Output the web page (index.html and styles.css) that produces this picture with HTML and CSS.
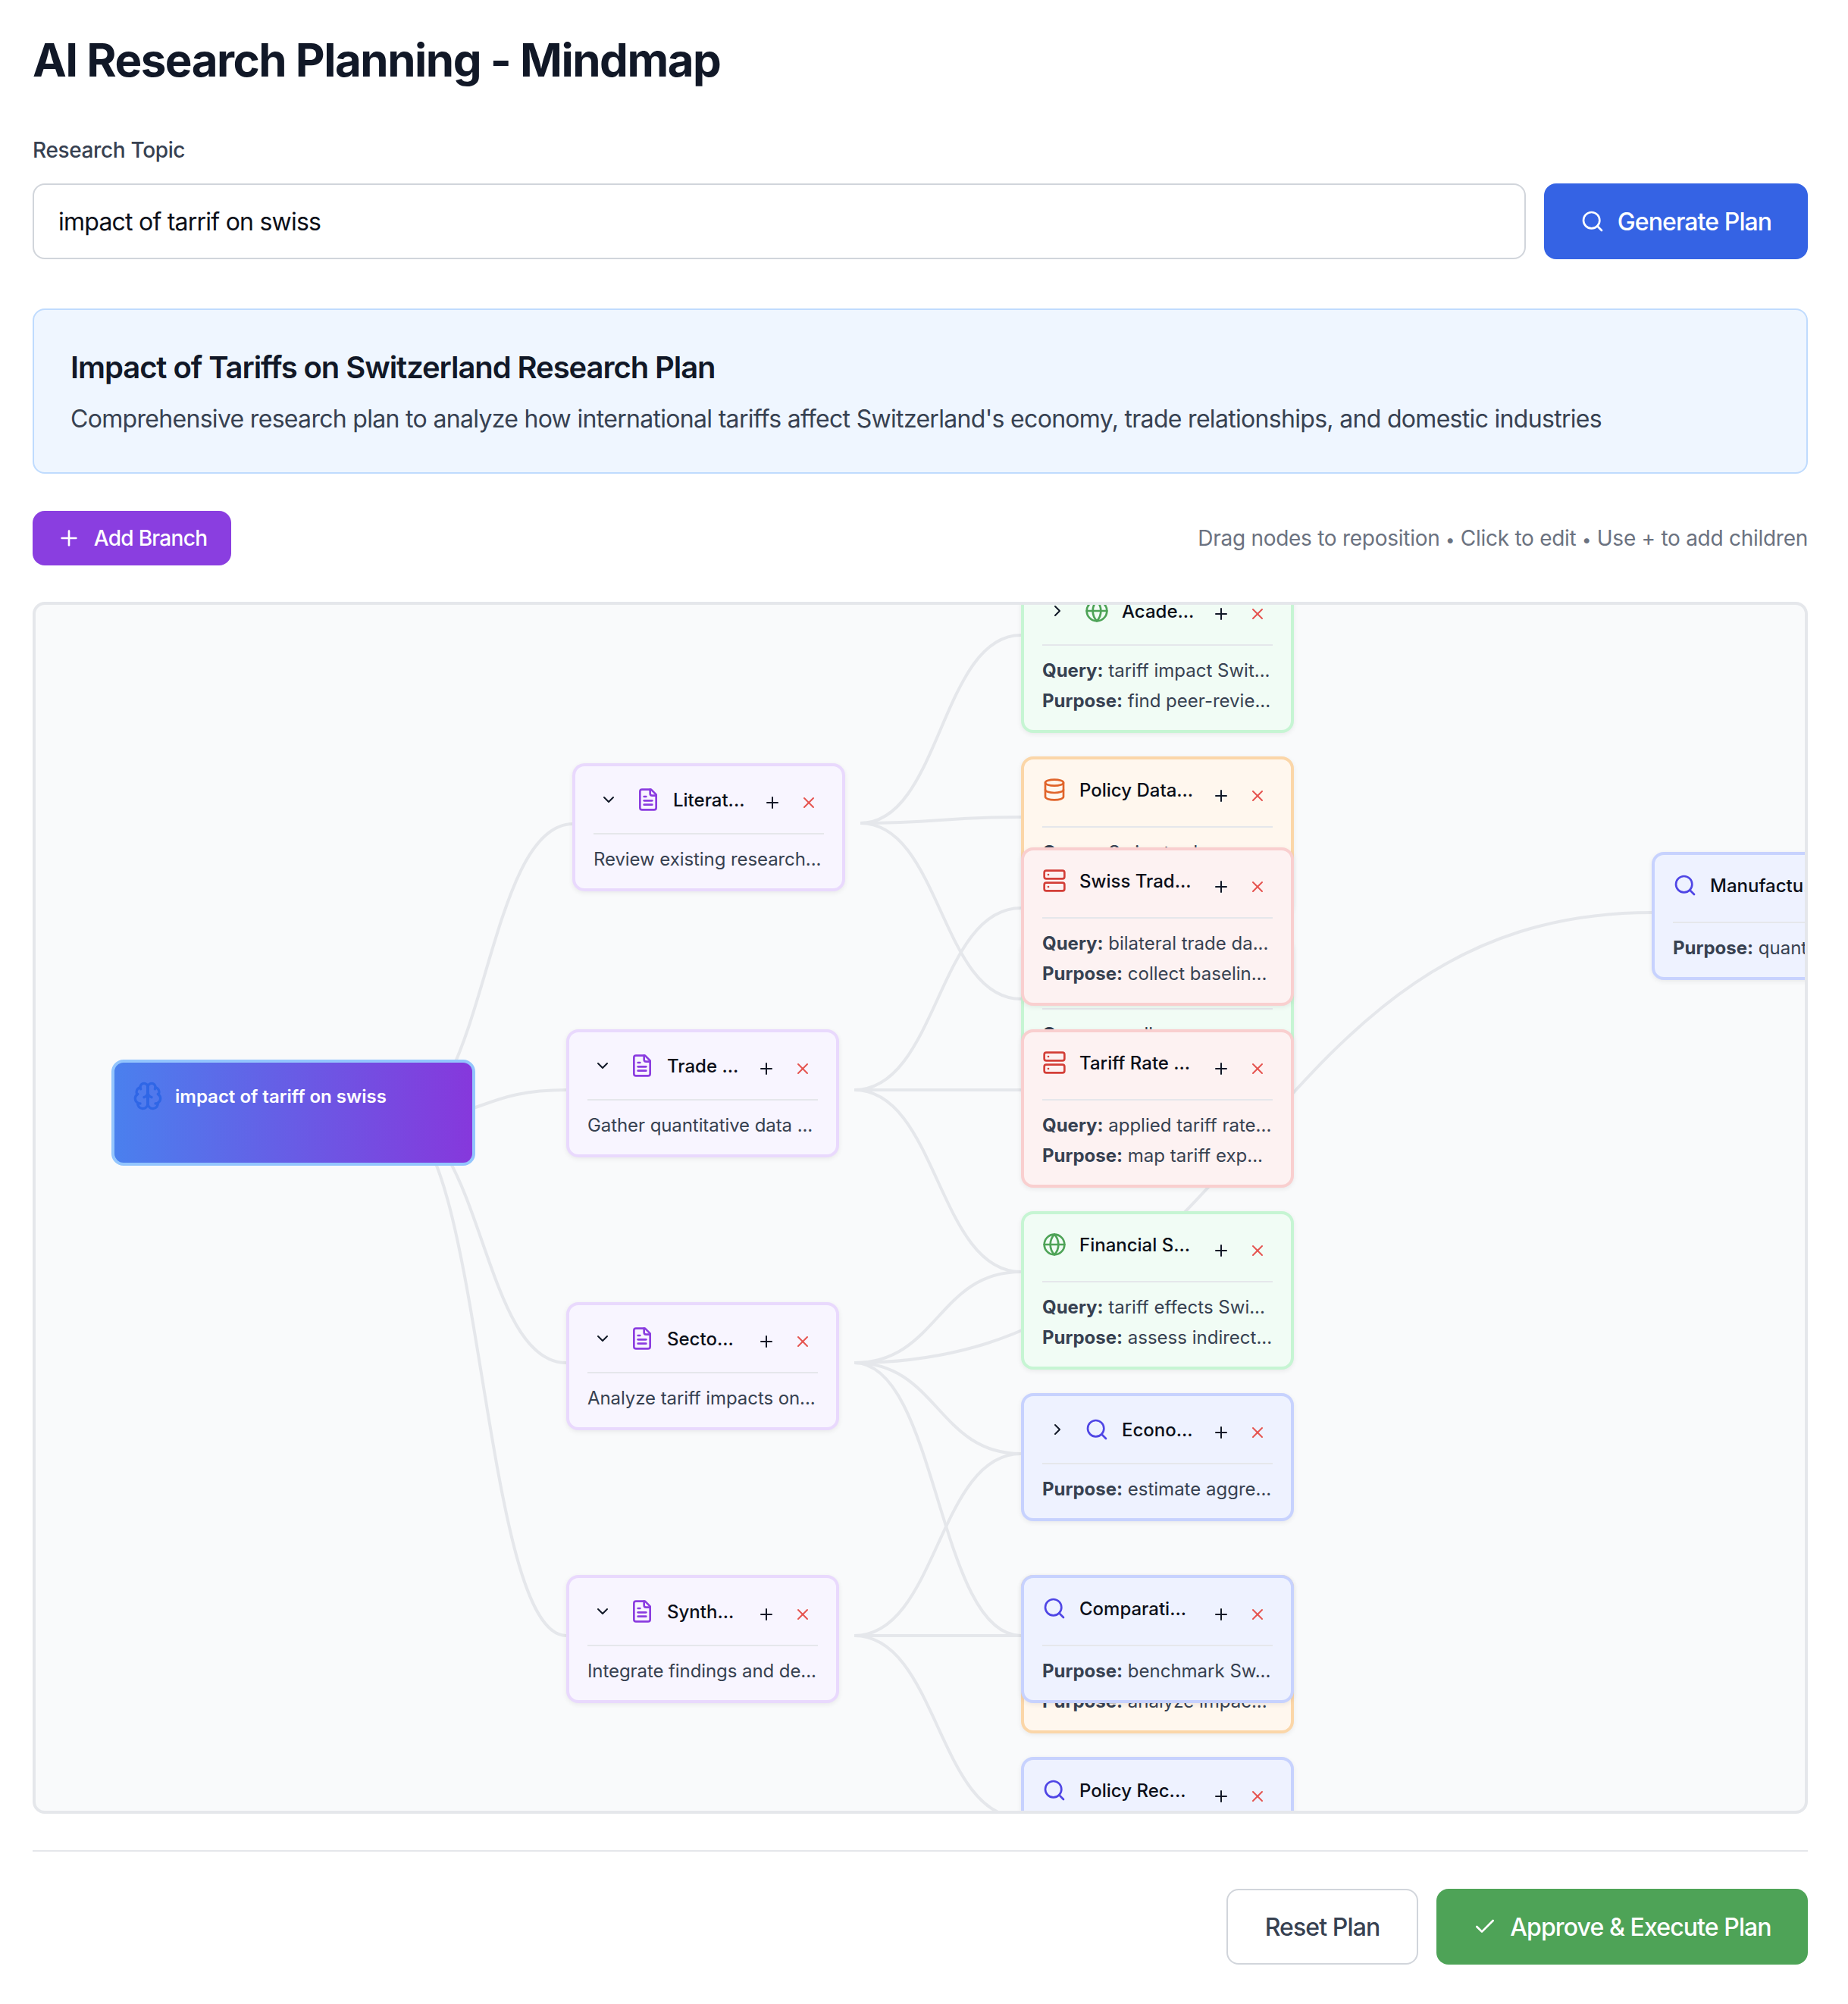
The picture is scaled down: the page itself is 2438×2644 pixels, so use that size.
FILE: index.html
```html
<!DOCTYPE html>
<html lang="en">
<head>
<meta charset="utf-8">
<title>AI Research Planning - Mindmap</title>
<link rel="stylesheet" href="styles.css">
</head>
<body>
<svg class="sprite" aria-hidden="true">
  <defs>
    <symbol id="i-search" viewBox="0 0 24 24"><circle cx="11" cy="11" r="8"/><path d="m21 21-4.3-4.3"/></symbol>
    <symbol id="i-plus" viewBox="0 0 24 24"><path d="M5 12h14"/><path d="M12 5v14"/></symbol>
    <symbol id="i-x" viewBox="0 0 24 24"><path d="M18 6 6 18"/><path d="m6 6 12 12"/></symbol>
    <symbol id="i-check" viewBox="0 0 24 24"><path d="M20 6 9 17l-5-5"/></symbol>
    <symbol id="i-down" viewBox="0 0 24 24"><path d="m6 9 6 6 6-6"/></symbol>
    <symbol id="i-right" viewBox="0 0 24 24"><path d="m9 18 6-6-6-6"/></symbol>
    <symbol id="i-file" viewBox="0 0 24 24"><path d="M15 2H6a2 2 0 0 0-2 2v16a2 2 0 0 0 2 2h12a2 2 0 0 0 2-2V7Z"/><path d="M14 2v4a2 2 0 0 0 2 2h4"/><path d="M10 9H8"/><path d="M16 13H8"/><path d="M16 17H8"/></symbol>
    <symbol id="i-globe" viewBox="0 0 24 24"><circle cx="12" cy="12" r="10"/><path d="M12 2a14.5 14.5 0 0 0 0 20 14.5 14.5 0 0 0 0-20"/><path d="M2 12h20"/></symbol>
    <symbol id="i-db" viewBox="0 0 24 24"><ellipse cx="12" cy="5" rx="9" ry="3"/><path d="M3 5V19A9 3 0 0 0 21 19V5"/><path d="M3 12A9 3 0 0 0 21 12"/></symbol>
    <symbol id="i-server" viewBox="0 0 24 24"><rect width="20" height="8" x="2" y="2" rx="2" ry="2"/><rect width="20" height="8" x="2" y="14" rx="2" ry="2"/><path d="M6 6h.01"/><path d="M6 18h.01"/></symbol>
    <symbol id="i-brain" viewBox="0 0 24 24"><path d="M12 5a3 3 0 1 0-5.997.125 4 4 0 0 0-2.526 5.77 4 4 0 0 0 .556 6.588A4 4 0 1 0 12 18Z"/><path d="M12 5a3 3 0 1 1 5.997.125 4 4 0 0 1 2.526 5.77 4 4 0 0 1-.556 6.588A4 4 0 1 1 12 18Z"/><path d="M15 13a4.5 4.5 0 0 1-3-4 4.5 4.5 0 0 1-3 4"/><path d="M12 5v13"/><path d="M17.599 6.5a3 3 0 0 0 .399-1.375"/><path d="M6.003 5.125A3 3 0 0 0 6.401 6.5"/><path d="M3.477 10.896a4 4 0 0 1 .585-.396"/><path d="M19.938 10.5a4 4 0 0 1 .585.396"/><path d="M6 18a4 4 0 0 1-1.967-.516"/><path d="M19.967 17.484A4 4 0 0 1 18 18"/></symbol>
  </defs>
</svg>

<main class="page">
  <h1 class="title">AI Research Planning - Mindmap</h1>

  <label class="label" for="topic">Research Topic</label>
  <div class="topic-row">
    <input class="topic-input" id="topic" type="text" value="impact of tarrif on swiss">
    <button class="btn btn-blue" type="button"><svg class="ico ico-btn"><use href="#i-search"/></svg>Generate Plan</button>
  </div>

  <section class="info">
    <h2 class="info-title">Impact of Tariffs on Switzerland Research Plan</h2>
    <p class="info-text">Comprehensive research plan to analyze how international tariffs affect Switzerland's economy, trade relationships, and domestic industries</p>
  </section>

  <div class="toolbar">
    <button class="btn btn-purple" type="button"><svg class="ico ico-btn"><use href="#i-plus"/></svg>Add Branch</button>
    <span class="hint">Drag nodes to reposition <span class="sep">•</span> Click to edit <span class="sep">•</span> Use + to add children</span>
  </div>

  <div class="canvas">
    <svg class="links" width="2400" height="1800" aria-hidden="true">
      <path d="M478 680C593.5 680 593.5 289 709 289"/>
      <path d="M478 680C589 680 589 640 700 640"/>
      <path d="M478 680C589 680 589 1000 700 1000"/>
      <path d="M478 680C589 680 589 1360 700 1360"/>
      <path d="M1088 288C1194 288 1194 40 1300 40"/>
      <path d="M1088 288C1194 288 1194 280 1300 280"/>
      <path d="M1088 288C1194 288 1194 520 1300 520"/>
      <path d="M1080 640C1190 640 1190 400 1300 400"/>
      <path d="M1080 640H1300"/>
      <path d="M1080 640C1190 640 1190 880 1300 880"/>
      <path d="M1080 1000C1190 1000 1190 880 1300 880"/>
      <path d="M1080 1000C1606 1000 1606 406 2132 406"/>
      <path d="M1080 1000C1190 1000 1190 1120 1300 1120"/>
      <path d="M1080 1000C1190 1000 1190 1360 1300 1360"/>
      <path d="M1080 1360C1190 1360 1190 1120 1300 1120"/>
      <path d="M1080 1360H1300"/>
      <path d="M1080 1360C1190 1360 1190 1600 1300 1600"/>
    </svg>

    <div class="root">
      <svg class="ico ico-brain"><use href="#i-brain"/></svg>
      <span class="root-text">impact of tariff on swiss</span>
    </div>

    <article class="node purple n-lit">
      <header class="node-head">
        <button class="chev" type="button"><svg class="ico ico-sm"><use href="#i-down"/></svg></button>
        <svg class="ico ico-type"><use href="#i-file"/></svg>
        <span class="node-title">Literat...</span>
        <span class="node-actions"><button class="act" type="button"><svg class="ico ico-sm"><use href="#i-plus"/></svg></button><button class="act del" type="button"><svg class="ico ico-sm"><use href="#i-x"/></svg></button></span>
      </header>
      <div class="node-body"><p>Review existing research...</p></div>
    </article>

    <article class="node purple n-trade">
      <header class="node-head">
        <button class="chev" type="button"><svg class="ico ico-sm"><use href="#i-down"/></svg></button>
        <svg class="ico ico-type"><use href="#i-file"/></svg>
        <span class="node-title">Trade ...</span>
        <span class="node-actions"><button class="act" type="button"><svg class="ico ico-sm"><use href="#i-plus"/></svg></button><button class="act del" type="button"><svg class="ico ico-sm"><use href="#i-x"/></svg></button></span>
      </header>
      <div class="node-body"><p>Gather quantitative data ...</p></div>
    </article>

    <article class="node purple n-sector">
      <header class="node-head">
        <button class="chev" type="button"><svg class="ico ico-sm"><use href="#i-down"/></svg></button>
        <svg class="ico ico-type"><use href="#i-file"/></svg>
        <span class="node-title">Secto...</span>
        <span class="node-actions"><button class="act" type="button"><svg class="ico ico-sm"><use href="#i-plus"/></svg></button><button class="act del" type="button"><svg class="ico ico-sm"><use href="#i-x"/></svg></button></span>
      </header>
      <div class="node-body"><p>Analyze tariff impacts on...</p></div>
    </article>

    <article class="node purple n-synth">
      <header class="node-head">
        <button class="chev" type="button"><svg class="ico ico-sm"><use href="#i-down"/></svg></button>
        <svg class="ico ico-type"><use href="#i-file"/></svg>
        <span class="node-title">Synth...</span>
        <span class="node-actions"><button class="act" type="button"><svg class="ico ico-sm"><use href="#i-plus"/></svg></button><button class="act del" type="button"><svg class="ico ico-sm"><use href="#i-x"/></svg></button></span>
      </header>
      <div class="node-body"><p>Integrate findings and de...</p></div>
    </article>

    <article class="node green n-academic">
      <header class="node-head">
        <button class="chev" type="button"><svg class="ico ico-sm"><use href="#i-right"/></svg></button>
        <svg class="ico ico-type"><use href="#i-globe"/></svg>
        <span class="node-title">Acade...</span>
        <span class="node-actions"><button class="act" type="button"><svg class="ico ico-sm"><use href="#i-plus"/></svg></button><button class="act del" type="button"><svg class="ico ico-sm"><use href="#i-x"/></svg></button></span>
      </header>
      <div class="node-body"><p><b>Query:</b> tariff impact Swit...</p><p><b>Purpose:</b> find peer-revie...</p></div>
    </article>

    <article class="node orange n-policy">
      <header class="node-head">
        <svg class="ico ico-type"><use href="#i-db"/></svg>
        <span class="node-title">Policy Data...</span>
        <span class="node-actions"><button class="act" type="button"><svg class="ico ico-sm"><use href="#i-plus"/></svg></button><button class="act del" type="button"><svg class="ico ico-sm"><use href="#i-x"/></svg></button></span>
      </header>
      <div class="node-body"><p><b>Query:</b> Swiss trade po...</p><p><b>Purpose:</b> review policy...</p></div>
    </article>

    <article class="node green n-small">
      <header class="node-head">
        <svg class="ico ico-type"><use href="#i-globe"/></svg>
        <span class="node-title">Industry R...</span>
        <span class="node-actions"><button class="act" type="button"><svg class="ico ico-sm"><use href="#i-plus"/></svg></button><button class="act del" type="button"><svg class="ico ico-sm"><use href="#i-x"/></svg></button></span>
      </header>
      <div class="node-body"><p><b>Query:</b> small ...</p><p><b>Purpose:</b> collect case...</p></div>
    </article>

    <article class="node red n-swiss">
      <header class="node-head">
        <svg class="ico ico-type"><use href="#i-server"/></svg>
        <span class="node-title">Swiss Trad...</span>
        <span class="node-actions"><button class="act" type="button"><svg class="ico ico-sm"><use href="#i-plus"/></svg></button><button class="act del" type="button"><svg class="ico ico-sm"><use href="#i-x"/></svg></button></span>
      </header>
      <div class="node-body"><p><b>Query:</b> bilateral trade da...</p><p><b>Purpose:</b> collect baselin...</p></div>
    </article>

    <article class="node red n-tariff">
      <header class="node-head">
        <svg class="ico ico-type"><use href="#i-server"/></svg>
        <span class="node-title">Tariff Rate ...</span>
        <span class="node-actions"><button class="act" type="button"><svg class="ico ico-sm"><use href="#i-plus"/></svg></button><button class="act del" type="button"><svg class="ico ico-sm"><use href="#i-x"/></svg></button></span>
      </header>
      <div class="node-body"><p><b>Query:</b> applied tariff rate...</p><p><b>Purpose:</b> map tariff exp...</p></div>
    </article>

    <article class="node green n-financial">
      <header class="node-head">
        <svg class="ico ico-type"><use href="#i-globe"/></svg>
        <span class="node-title">Financial S...</span>
        <span class="node-actions"><button class="act" type="button"><svg class="ico ico-sm"><use href="#i-plus"/></svg></button><button class="act del" type="button"><svg class="ico ico-sm"><use href="#i-x"/></svg></button></span>
      </header>
      <div class="node-body"><p><b>Query:</b> tariff effects Swi...</p><p><b>Purpose:</b> assess indirect...</p></div>
    </article>

    <article class="node blue n-econ">
      <header class="node-head">
        <button class="chev" type="button"><svg class="ico ico-sm"><use href="#i-right"/></svg></button>
        <svg class="ico ico-type"><use href="#i-search"/></svg>
        <span class="node-title">Econo...</span>
        <span class="node-actions"><button class="act" type="button"><svg class="ico ico-sm"><use href="#i-plus"/></svg></button><button class="act del" type="button"><svg class="ico ico-sm"><use href="#i-x"/></svg></button></span>
      </header>
      <div class="node-body"><p><b>Purpose:</b> estimate aggre...</p></div>
    </article>

    <article class="node orange n-orange2">
      <header class="node-head">
        <svg class="ico ico-type"><use href="#i-db"/></svg>
        <span class="node-title">Sector Data...</span>
        <span class="node-actions"><button class="act" type="button"><svg class="ico ico-sm"><use href="#i-plus"/></svg></button><button class="act del" type="button"><svg class="ico ico-sm"><use href="#i-x"/></svg></button></span>
      </header>
      <div class="node-body"><p><b>Query:</b> Swiss sector da...</p><p><b>Purpose:</b> analyze impac...</p></div>
    </article>

    <article class="node blue n-compare">
      <header class="node-head">
        <svg class="ico ico-type"><use href="#i-search"/></svg>
        <span class="node-title">Comparati...</span>
        <span class="node-actions"><button class="act" type="button"><svg class="ico ico-sm"><use href="#i-plus"/></svg></button><button class="act del" type="button"><svg class="ico ico-sm"><use href="#i-x"/></svg></button></span>
      </header>
      <div class="node-body"><p><b>Purpose:</b> benchmark Sw...</p></div>
    </article>

    <article class="node blue n-rec">
      <header class="node-head">
        <svg class="ico ico-type"><use href="#i-search"/></svg>
        <span class="node-title">Policy Rec...</span>
        <span class="node-actions"><button class="act" type="button"><svg class="ico ico-sm"><use href="#i-plus"/></svg></button><button class="act del" type="button"><svg class="ico ico-sm"><use href="#i-x"/></svg></button></span>
      </header>
      <div class="node-body"><p><b>Purpose:</b> propose polic...</p></div>
    </article>

    <article class="node blue n-manu">
      <header class="node-head">
        <svg class="ico ico-type"><use href="#i-search"/></svg>
        <span class="node-title">Manufactu...</span>
        <span class="node-actions"><button class="act" type="button"><svg class="ico ico-sm"><use href="#i-plus"/></svg></button><button class="act del" type="button"><svg class="ico ico-sm"><use href="#i-x"/></svg></button></span>
      </header>
      <div class="node-body"><p><b>Purpose:</b> quantify expo...</p></div>
    </article>
  </div>

  <footer class="footer">
    <button class="btn btn-ghost" type="button">Reset Plan</button>
    <button class="btn btn-green" type="button"><svg class="ico ico-btn"><use href="#i-check"/></svg>Approve &amp; Execute Plan</button>
  </footer>
</main>
</body>
</html>
```

FILE: styles.css
```css
* { box-sizing: border-box; }
html, body { margin: 0; padding: 0; background: #fff; }
body { font-family: Inter, "Liberation Sans", sans-serif; color: #111827; }
p, h1, h2 { margin: 0; }
button { font: inherit; border: 0; background: none; padding: 0; }
.sprite { position: absolute; width: 0; height: 0; }

.ico { fill: none; stroke: currentColor; stroke-width: 2; stroke-linecap: round; stroke-linejoin: round; flex: none; display: block; }
.ico-btn { width: 32px; height: 32px; }
.ico-sm { width: 24px; height: 24px; }
.ico-type { width: 32px; height: 32px; }
.ico-brain { width: 40px; height: 40px; color: #2f66e6; }

.page { padding: 39px 53px 0 43px; }
.title { font-size: 60px; line-height: 80px; font-weight: 700; letter-spacing: -1.5px; color: #111827; margin-bottom: 59px; }
.label { display: block; font-size: 28px; line-height: 40px; font-weight: 500; letter-spacing: -.36px; color: #374151; margin-bottom: 24px; }

.topic-row { display: flex; gap: 24px; height: 100px; }
.topic-input { flex: 1; min-width: 0; height: 100px; border: 2px solid #d1d5db; border-radius: 16px; padding: 0 32px; font: 32px Inter, sans-serif; letter-spacing: -.77px; color: #0b0f19; outline: none; background: #fff; }

.btn { display: flex; align-items: center; justify-content: center; gap: 17px; border-radius: 16px; font-size: 32px; font-weight: 500; letter-spacing: -.9px; color: #fff; }
.btn-blue { width: 348px; background: #3563e4; }
.btn-purple { width: 262px; height: 72px; background: #8a3ee0; font-size: 28px; letter-spacing: -.7px; }
.btn-ghost { width: 253px; height: 100px; background: #fff; border: 2px solid #d1d5db; color: #374151; }
.btn-green { width: 490px; height: 100px; background: #4ea357; }

.info { margin-top: 65px; height: 218px; border: 2px solid #bfdbfe; border-radius: 16px; background: #eff6ff; padding: 52px 48px 0; }
.info-title { font-size: 40px; line-height: 48px; font-weight: 600; letter-spacing: -1.07px; color: #111827; margin-bottom: 24px; }
.info-text { font-size: 32px; line-height: 40px; letter-spacing: -.69px; color: #374151; white-space: nowrap; }

.toolbar { margin-top: 49px; display: flex; justify-content: space-between; align-items: center; }
.hint { font-size: 28px; letter-spacing: -.27px; color: #6b7280; }
.sep { font-size: 22px; }

.canvas { position: relative; margin-top: 48px; height: 1599px; border: 4px solid #e5e7eb; border-radius: 16px; background: #f9fafb; overflow: hidden; }
.links { position: absolute; left: 0; top: 0; fill: none; stroke: #e5e7eb; stroke-width: 4; }

.root { position: absolute; left: 100px; top: 600px; width: 480px; height: 140px; border: 4px solid #93c5fd; border-radius: 16px; padding: 24px; background: linear-gradient(90deg, #4a80ee, #8638dc); display: flex; gap: 16px; }
.root-text { font-size: 24px; line-height: 40px; margin-top: 1px; font-weight: 600; color: #fff; white-space: nowrap; }

.node { position: absolute; width: 360px; border: 4px solid; border-radius: 16px; padding: 24px 24px 18px; box-shadow: 0 2px 6px rgba(0, 0, 0, .07); }
.node-head { display: flex; align-items: flex-start; min-height: 66px; padding-bottom: 20px; border-bottom: 2px solid #e5e7eb; position: relative; }
.chev { width: 40px; height: 40px; margin-right: 16px; display: flex; align-items: center; justify-content: center; color: #111827; flex: none; }
.chev + .ico-type { margin-top: 4px; }
.node-head .ico-type { margin-right: 17px; }
.node-title { font-size: 24px; line-height: 32px; margin-top: 1px; font-weight: 500; color: #0b0f19; white-space: nowrap; flex: 1; min-width: 0; overflow: hidden; }
.chev ~ .node-title { margin-top: 5px; }
.node-actions { position: absolute; right: 0; top: 4px; display: flex; gap: 8px; }
.act { width: 40px; height: 40px; display: flex; align-items: center; justify-content: center; color: #111827; }
.del { color: #e5534f; }
.node-body { margin-top: 13px; font-size: 24px; line-height: 40px; color: #374151; }
.node-body p { white-space: nowrap; overflow: hidden; }
.node-body b { font-weight: 700; }

.purple { background: #f8f5ff; border-color: #e9d9fd; }
.purple .ico-type { color: #8b3de0; }
.purple .node-body { letter-spacing: -.08px; }
.green { background: #f1fcf5; border-color: #c6f5d3; }
.green .ico-type { color: #4ea357; }
.orange { background: #fff7ee; border-color: #fbd6a8; }
.orange .ico-type { color: #e0642a; }
.red { background: #fdf2f2; border-color: #f9cfcf; }
.red .ico-type { color: #d33f38; }
.blue { background: #eef2ff; border-color: #c7d2fe; }
.blue .ico-type { color: #4f46e5; }

.n-lit { left: 708px; top: 209px; }
.n-trade { left: 700px; top: 560px; }
.n-sector { left: 700px; top: 920px; }
.n-synth { left: 700px; top: 1280px; }
.n-academic { left: 1300px; top: -40px; }
.n-policy { left: 1300px; top: 200px; }
.n-small { left: 1300px; top: 440px; }
.n-swiss { left: 1300px; top: 320px; }
.n-tariff { left: 1300px; top: 560px; }
.n-financial { left: 1300px; top: 800px; }
.n-econ { left: 1300px; top: 1040px; }
.n-orange2 { left: 1300px; top: 1280px; }
.n-compare { left: 1300px; top: 1280px; }
.n-rec { left: 1300px; top: 1520px; }
.n-manu { left: 2132px; top: 326px; }

.footer { margin-top: 48px; border-top: 2px solid #e5e7eb; padding-top: 49px; display: flex; justify-content: flex-end; gap: 24px; }
```
